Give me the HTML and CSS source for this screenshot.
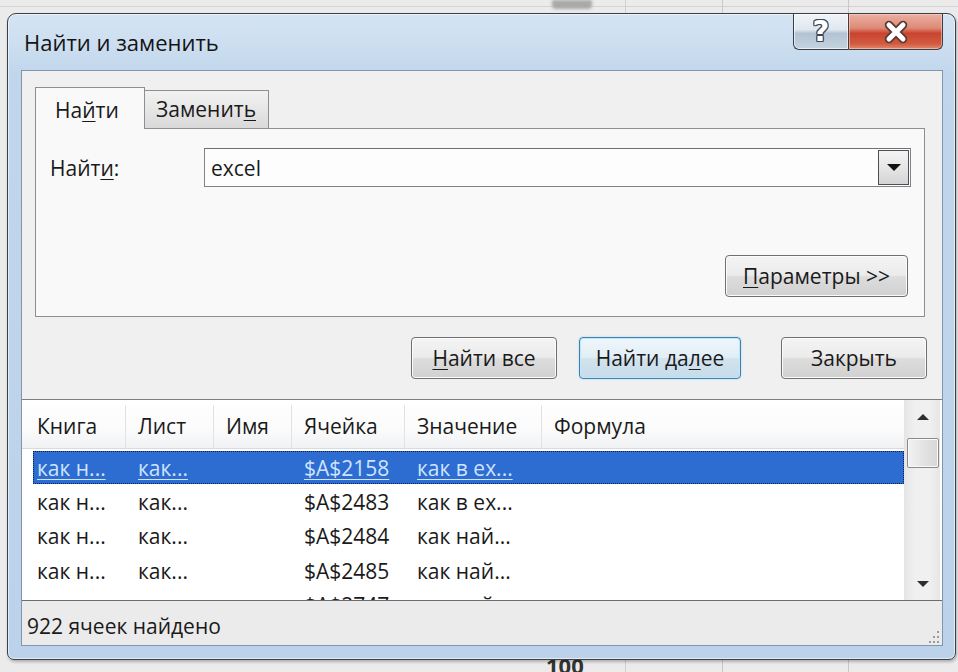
FILE: index.html
```html
<!DOCTYPE html>
<html lang="ru">
<head>
<meta charset="utf-8">
<title>Найти и заменить</title>
<link rel="stylesheet" href="styles.css">
</head>
<body>
<div class="sheet">
  <div class="sheet-smear"></div>
  <div class="sheet-cell">100</div>
</div>
<div class="dialog">
  <div class="titlebar">
    <div class="title">Найти и заменить</div>
    <div class="caption-buttons">
      <div class="cap-btn help">
        <span class="help-glyph">?</span>
      </div>
      <div class="cap-btn close">
        <svg width="34" height="24" viewBox="0 0 34 24">
          <path d="M10 5 L24 19 M24 5 L10 19" class="x-outline"/>
          <path d="M10 5 L24 19 M24 5 L10 19" class="x-fill"/>
        </svg>
      </div>
    </div>
  </div>
  <div class="client">
    <div class="tabs">
      <div class="tab active">На<u>й</u>ти</div>
      <div class="tab">Заменит<u>ь</u></div>
    </div>
    <div class="panel">
      <div class="find-row">
        <label class="find-label">Найт<u>и</u>:</label>
        <div class="combo">
          <span class="combo-text">excel</span>
          <span class="combo-drop"><span class="tri-down"></span></span>
        </div>
      </div>
      <div class="panel-bottom">
        <button class="btn params"><u>П</u>араметры &gt;&gt;</button>
      </div>
    </div>
    <div class="actions">
      <button class="btn find-all"><u>Н</u>айти все</button>
      <button class="btn find-next default">Найти да<u>л</u>ее</button>
      <button class="btn close-btn">Закрыть</button>
    </div>
    <div class="results">
      <div class="results-main">
        <div class="grid-head">
          <div class="hcell first">Книга</div>
          <div class="hcell">Лист</div>
          <div class="hcell">Имя</div>
          <div class="hcell">Ячейка</div>
          <div class="hcell">Значение</div>
          <div class="hcell last">Формула</div>
        </div>
        <div class="rows">
          <div class="row selected">
            <span class="cell"><span class="lnk">как н...</span></span>
            <span class="cell"><span class="lnk">как...</span></span>
            <span class="cell"></span>
            <span class="cell"><span class="lnk">$A$2158</span></span>
            <span class="cell"><span class="lnk">как в ex...</span></span>
            <span class="cell"></span>
          </div>
          <div class="row">
            <span class="cell">как н...</span><span class="cell">как...</span><span class="cell"></span><span class="cell">$A$2483</span><span class="cell">как в ex...</span><span class="cell"></span>
          </div>
          <div class="row">
            <span class="cell">как н...</span><span class="cell">как...</span><span class="cell"></span><span class="cell">$A$2484</span><span class="cell">как най...</span><span class="cell"></span>
          </div>
          <div class="row">
            <span class="cell">как н...</span><span class="cell">как...</span><span class="cell"></span><span class="cell">$A$2485</span><span class="cell">как най...</span><span class="cell"></span>
          </div>
          <div class="row">
            <span class="cell">как н...</span><span class="cell">как...</span><span class="cell"></span><span class="cell">$A$2747</span><span class="cell">как най...</span><span class="cell"></span>
          </div>
        </div>
      </div>
      <div class="vscroll">
        <div class="arrow-up"></div>
        <div class="thumb"></div>
        <div class="track"></div>
        <div class="arrow-down"></div>
      </div>
    </div>
    <div class="status">
      <span class="status-text">922 ячеек найдено</span>
      <svg class="grip" width="12" height="14" viewBox="0 0 12 14">
        <rect x="9" y="1" width="2" height="2"/>
        <rect x="5" y="6" width="2" height="2"/><rect x="9" y="6" width="2" height="2"/>
        <rect x="1" y="11" width="2" height="2"/><rect x="5" y="11" width="2" height="2"/><rect x="9" y="11" width="2" height="2"/>
      </svg>
    </div>
  </div>
</div>
</body>
</html>
```

FILE: styles.css
```css
* { box-sizing: border-box; }

html, body {
  margin: 0;
  padding: 0;
  width: 958px;
  height: 672px;
  overflow: hidden;
}

body {
  font-family: "Open Sans", "Noto Sans", "DejaVu Sans", sans-serif;
  color: #1a1a1a;
  background:
    linear-gradient(#c8c8c8, #c8c8c8) 722px 0 / 1px 100% no-repeat,
    linear-gradient(#c8c8c8, #c8c8c8) 848px 0 / 1px 100% no-repeat,
    linear-gradient(#d0d0d0, #d0d0d0) 625px 0 / 1px 100% no-repeat,
    linear-gradient(#d4d4d4, #d4d4d4) 0 6px / 100% 1px no-repeat,
    #ebebeb;
}

u { text-decoration: underline; text-underline-offset: 3px; text-decoration-thickness: 1px; }

.sheet {
  position: relative;
  width: 958px;
  height: 672px;
}

.sheet-smear {
  position: absolute;
  left: 552px;
  top: 0;
  width: 40px;
  height: 9px;
  border-radius: 0 0 4px 4px;
  background: #a9a9a9;
  filter: blur(1.5px);
}

.sheet-cell {
  position: absolute;
  left: 546px;
  top: 650px;
  font-size: 22px;
  font-weight: 700;
  color: #333;
}

/* dialog window */
.dialog {
  position: absolute;
  left: 7px;
  top: 13px;
  width: 949px;
  height: 647px;
  border: 1px solid #3c3f44;
  border-radius: 9px 9px 7px 7px;
  background: linear-gradient(180deg, #d5e4f3 0px, #c9dcef 40px, #c1d6ec 60px, #bcd2ea 100%);
  box-shadow: inset 0 0 0 1px rgba(255,255,255,0.55), 1px 2px 3px rgba(0,0,0,0.25);
  display: flex;
  flex-direction: column;
  padding: 0 12px 13px 13px;
}

.titlebar {
  height: 56px;
  display: flex;
  align-items: flex-start;
  justify-content: space-between;
  margin-left: -13px;
  margin-right: -12px;
  padding: 0 12px 0 16px;
}

.title {
  margin-top: 15px;
  font-size: 22px;
  line-height: 26px;
  color: #141414;
}

.caption-buttons {
  display: flex;
  height: 36px;
}

.cap-btn {
  height: 36px;
  border: 1px solid #3b3e44;
  border-top: none;
  display: flex;
  align-items: center;
  justify-content: center;
}

.cap-btn.help {
  width: 55px;
  border-radius: 0 0 0 6px;
  border-right: none;
  background: linear-gradient(180deg, #f0f4f8 0%, #dfe7ef 45%, #b3c3d4 55%, #c5d3e0 100%);
  box-shadow: inset 0 0 0 1px rgba(255,255,255,0.6);
}

.cap-btn.close {
  width: 95px;
  border-radius: 0 0 6px 0;
  background: linear-gradient(180deg, #eab0a3 0%, #de8a77 40%, #c94430 55%, #d25a40 85%, #e08a6c 100%);
  box-shadow: inset 0 0 0 1px rgba(255,220,210,0.5);
  border-left: 1px solid #4a3a38;
}

.help-glyph {
  font-family: "DejaVu Sans", sans-serif;
  font-weight: 700;
  font-size: 29px;
  line-height: 32px;
  color: #ffffff;
  text-shadow:
    1px 0 0 #3a4756, -1px 0 0 #3a4756, 0 1px 0 #3a4756, 0 -1px 0 #3a4756,
    1px 1px 0 #3a4756, -1px -1px 0 #3a4756, 1px -1px 0 #3a4756, -1px 1px 0 #3a4756;
  margin-top: -1px;
}

.x-outline {
  stroke: #5a3a34;
  stroke-width: 8.5;
  stroke-linecap: round;
  fill: none;
}

.x-fill {
  stroke: #ffffff;
  stroke-width: 5;
  stroke-linecap: round;
  fill: none;
}

/* client area */
.client {
  flex: 1;
  background: #f0f0f0;
  border: 1px solid #8196ad;
  display: flex;
  flex-direction: column;
  padding-top: 16px;
}

.tabs {
  display: flex;
  align-items: flex-end;
  height: 41px;
  margin-left: 13px;
  position: relative;
  z-index: 2;
}

.tab {
  height: 38px;
  padding: 0 11px;
  font-size: 21px;
  line-height: 36px;
  border: 1px solid #8d8f93;
  border-bottom: none;
  background: linear-gradient(180deg, #f2f2f2 0%, #e6e6e6 50%, #d9d9d9 100%);
  border-left: none;
  white-space: nowrap;
}

.tab.active {
  height: 42px;
  width: 110px;
  margin-bottom: -1px;
  padding: 0 19px;
  line-height: 44px;
  background: #f9f9f9;
  border-left: 1px solid #8d8f93;
}

.tab:not(.active) {
  width: 124px;
}

.panel {
  height: 189px;
  margin: 0 17px 0 13px;
  border: 1px solid #8d8f93;
  background: #f9f9f9;
  display: flex;
  flex-direction: column;
  justify-content: space-between;
  padding: 19px 16px 19px 14px;
}

.find-row {
  display: flex;
  align-items: center;
  margin-right: -3px;
}

.find-label {
  width: 154px;
  font-size: 21px;
}

.combo {
  flex: 1;
  height: 39px;
  border: 1px solid #7f8388;
  border-top-color: #6d7075;
  background: #fdfdfd;
  display: flex;
  align-items: center;
  padding: 1px 1px 1px 6px;
}

.combo-text {
  flex: 1;
  font-size: 21px;
}

.combo-drop {
  width: 31px;
  height: 35px;
  border: 1px solid #4d4f52;
  background: linear-gradient(180deg, #f3f3f3 0%, #e6e6e6 50%, #d4d4d4 100%);
  display: flex;
  align-items: center;
  justify-content: center;
}

.tri-down {
  width: 0;
  height: 0;
  border-left: 7px solid transparent;
  border-right: 7px solid transparent;
  border-top: 7px solid #111;
}

.panel-bottom {
  display: flex;
  justify-content: flex-end;
}

.btn {
  font-family: inherit;
  font-size: 21px;
  color: #1a1a1a;
  height: 42px;
  border: 1px solid #707070;
  border-radius: 4px;
  background: linear-gradient(180deg, #f4f4f4 0%, #ebebeb 48%, #dddddd 52%, #d0d0d0 100%);
  box-shadow: inset 0 0 0 1px #fbfbfb;
  padding: 0;
  cursor: default;
  white-space: nowrap;
}

.btn.params { width: 183px; }

.actions {
  display: flex;
  justify-content: flex-end;
  margin: 20px 15px 0 0;
}

.find-all { width: 146px; }
.find-next { width: 162px; margin-left: 22px; }
.close-btn { width: 146px; margin-left: 40px; }

.btn.default {
  border-color: #3c7fb1;
  background: linear-gradient(180deg, #eef6fb 0%, #e2eef6 48%, #d2e3ee 52%, #c6dbe9 100%);
  box-shadow: inset 0 0 0 1px #bfe8f8, 0 0 2px #9fd5ef;
}

/* results */
.results {
  margin-top: 20px;
  height: 201px;
  border-top: 1px solid #7a7f86;
  background: #ffffff;
  display: flex;
}

.results-main {
  flex: 1;
  overflow: hidden;
  display: flex;
  flex-direction: column;
}

.grid-head {
  height: 49px;
  display: grid;
  grid-template-columns: 103px 88px 78px 113px 137px 1fr;
  background: linear-gradient(180deg, #ffffff 0%, #fbfbfb 60%, #f1f2f4 100%);
  border-bottom: 1px solid #d6d9de;
  flex: none;
}

.hcell {
  font-size: 21px;
  display: flex;
  align-items: center;
  padding-left: 12px;
  padding-bottom: 2px;
  border-left: 1px solid #e0e2e5;
  margin-top: 5px;
  white-space: nowrap;
}

.hcell.first {
  border-left: none;
  padding-left: 15px;
}

.rows {
  padding-top: 1px;
}

.row {
  height: 34.5px;
  display: grid;
  grid-template-columns: 92px 88px 78px 113px 137px 1fr;
  margin-left: 11px;
  align-items: center;
  font-size: 21px;
  border: 1px dotted transparent;
  flex: none;
}

.cell {
  white-space: nowrap;
  padding-left: 12px;
}

.row .cell:first-child { padding-left: 3px; }

.row.selected {
  background: #2d6cd0;
  border: 1px dotted #0b2149;
  height: 33px;
  margin-top: 1px;
  margin-bottom: 0.5px;
}

.lnk {
  color: #cfe3ff;
  text-decoration: underline;
  text-underline-offset: 3px;
  text-decoration-thickness: 1px;
}

.vscroll {
  width: 36px;
  margin-right: 2px;
  background: linear-gradient(90deg, #e6e6e6 0%, #f0f0f0 30%, #f0f0f0 70%, #e6e6e6 100%);
  border-left: 1px solid #e4e4e4;
  display: flex;
  flex-direction: column;
  align-items: center;
}

.arrow-up {
  margin-top: 14px;
  width: 0;
  height: 0;
  border-left: 6px solid transparent;
  border-right: 6px solid transparent;
  border-bottom: 6px solid #2e2e2e;
}

.thumb {
  margin-top: 18px;
  width: 32px;
  height: 30px;
  border: 1px solid #8a8a8a;
  border-radius: 2px;
  background: linear-gradient(90deg, #f2f2f2 0%, #e4e4e4 50%, #d6d6d6 100%);
  box-shadow: inset 0 0 0 1px #fafafa;
}

.track { flex: 1; }

.arrow-down {
  margin-bottom: 13px;
  width: 0;
  height: 0;
  border-left: 6px solid transparent;
  border-right: 6px solid transparent;
  border-top: 6px solid #2e2e2e;
}

/* status bar */
.status {
  flex: 1;
  border-top: 1px solid #6a6d72;
  background: #ebebeb;
  display: flex;
  align-items: center;
  justify-content: space-between;
  padding: 6px 2px 0 5px;
  position: relative;
}

.status-text {
  font-size: 21px;
}

.grip {
  align-self: flex-end;
  margin-bottom: 1px;
  fill: #9a9a9a;
}
```
